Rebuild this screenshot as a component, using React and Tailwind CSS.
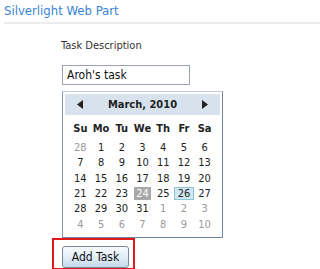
import React from "react";

const font = { fontFamily: '"DejaVu Sans Condensed", "DejaVu Sans", Tahoma, sans-serif' };

const weeks = [
  [28, 1, 2, 3, 4, 5, 6],
  [7, 8, 9, 10, 11, 12, 13],
  [14, 15, 16, 17, 18, 19, 20],
  [21, 22, 23, 24, 25, 26, 27],
  [28, 29, 30, 31, 1, 2, 3],
  [4, 5, 6, 7, 8, 9, 10],
];

function Day({ value, row }) {
  const outside = (row === 0 && value > 20) || (row >= 4 && value < 15);
  if (row === 3 && value === 24) {
    return (
      <div className="flex justify-center">
        <span className="w-[17px] h-[13px] bg-[#a8a8a8] text-white flex items-center justify-center">24</span>
      </div>
    );
  }
  if (row === 3 && value === 26) {
    return (
      <div className="flex justify-center">
        <span className="w-[20px] h-[13px] bg-[#cfe8f2] border border-[#8fc4d8] text-[#222] flex items-center justify-center">26</span>
      </div>
    );
  }
  return (
    <div className={`text-center ${outside ? "text-[#9a9a9a]" : "text-[#222]"}`}>{value}</div>
  );
}

export default function App() {
  return (
    <div className="w-[320px] h-[269px] bg-white overflow-hidden" style={font}>
      {/* Web part title */}
      <div className="pl-[4px]">
        <div className="h-[22px] pt-[3px] text-[13px] leading-[16px] text-[#3a84d4]">Silverlight Web Part</div>
        <div className="h-[2px] bg-[#ececec]" />
      </div>

      <div className="pl-[62px]">
        <div className="mt-[15px] text-[11px] leading-[14px] text-[#333] -ml-[1px]">Task Description</div>

        <div className="mt-[12px] w-[128px] h-[20px] border border-[#9aa3ad] pl-[4px] text-[12px] leading-[18px] text-[#111]">
          Aroh's task
        </div>

        {/* Calendar */}
        <div className="mt-[6px] w-[161px] h-[147px] border border-[#6f84a0] border-t-[#c3ccd6] border-l-[#8797ac] p-[2px] text-[11px] leading-[15px]">
          <div className="h-[21px] bg-[#d7e2ed] flex items-center justify-between px-[12px]">
            <svg width="6" height="9" viewBox="0 0 6 9">
              <polygon points="6,0 6,9 0,4.5" fill="#222" />
            </svg>
            <span className="font-bold text-[11px] text-[#222]">March, 2010</span>
            <svg width="6" height="9" viewBox="0 0 6 9">
              <polygon points="0,0 0,9 6,4.5" fill="#222" />
            </svg>
          </div>
          <div className="px-[5px] pt-[6px]">
            <div className="grid grid-cols-7 font-bold text-[#222] h-[15px]">
              {["Su", "Mo", "Tu", "We", "Th", "Fr", "Sa"].map((d) => (
                <div key={d} className="text-center">{d}</div>
              ))}
            </div>
            <div className="mt-[4px] flex flex-col">
              {weeks.map((w, r) => (
                <div key={r} className="grid grid-cols-7 h-[15.3px] items-center">
                  {w.map((v, i) => (
                    <Day key={i} value={v} row={r} />
                  ))}
                </div>
              ))}
            </div>
          </div>
        </div>
      </div>

      {/* Add Task button, highlighted */}
      <div className="ml-[52px] w-[83px] h-[32px] border-2 border-[#e0191b] pl-[8px] pt-[4px]">
        <button className="w-[67px] h-[22px] rounded-[3px] border border-[#7a8a99] bg-gradient-to-b from-[#f7fbff] via-[#e3eef8] to-[#c4d9ec] text-[12px] leading-[18px] text-[#111]">
          Add Task
        </button>
      </div>
    </div>
  );
}
